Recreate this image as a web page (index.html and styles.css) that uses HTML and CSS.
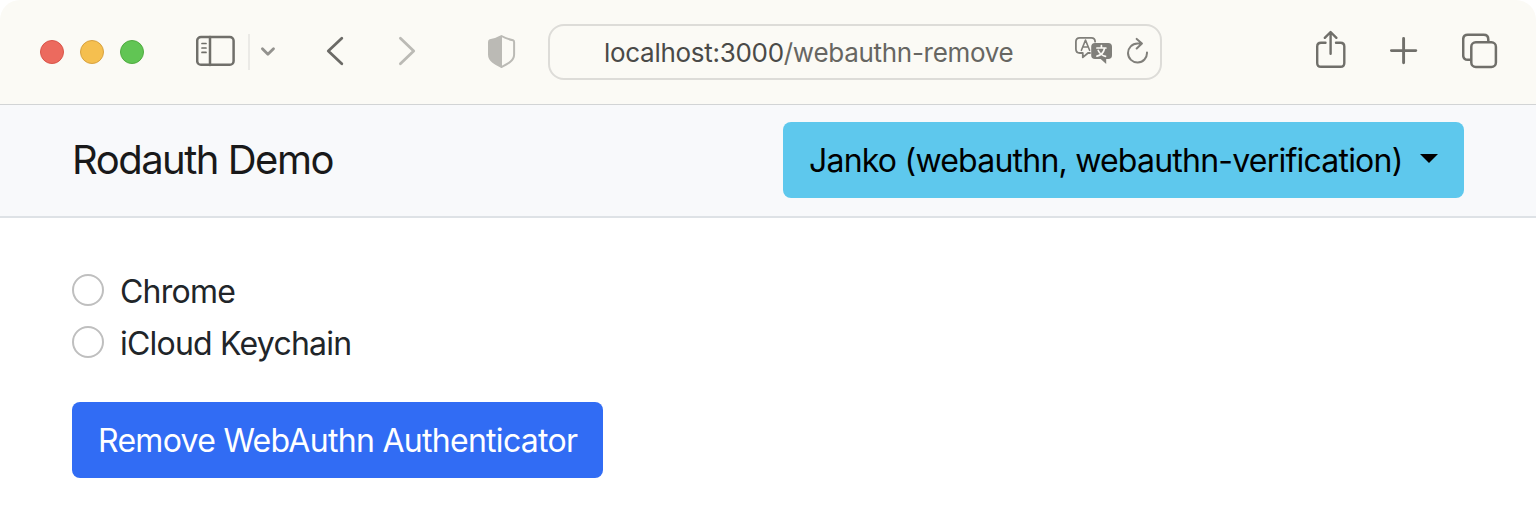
FILE: index.html
```html
<!DOCTYPE html>
<html lang="en">
<head>
<meta charset="utf-8">
<title>Rodauth Demo</title>
<link rel="stylesheet" href="styles.css">
</head>
<body>
<header class="toolbar">
  <div class="lights"><span class="light red"></span><span class="light yellow"></span><span class="light green"></span></div>
  <svg class="icon sidebar" width="40" height="52" viewBox="196 26 40 52" stroke="#706f6a" stroke-width="2.5"><rect x="197.2" y="37" width="36.4" height="27.8" rx="3.8"/><path d="M210 37v28"/><path d="M202 43.5h4M202 48h4M202 52.4h4" stroke-width="1.7"/></svg>
  <span class="divider"></span>
  <svg class="icon chevron" width="16" height="52" viewBox="260 26 16 52" stroke="#93928e" stroke-width="2.8"><path d="M262.4 48.7l5.5 5.5 5.6-5.5"/></svg>
  <svg class="icon back" width="20" height="52" viewBox="325 26 20 52" stroke="#6b6a66" stroke-width="2.8"><path d="M341.8 38.3L328.3 51l13.5 12.7"/></svg>
  <svg class="icon forward" width="20" height="52" viewBox="397 26 20 52" stroke="#bbbab5" stroke-width="2.8"><path d="M400.4 38.3L413.7 51l-13.3 12.7"/></svg>
  <svg class="icon shield" width="28" height="52" viewBox="488 26 28 52" stroke="#bbbab5" stroke-width="2"><path d="M501.5 36C505 38 509 39.3 513 40.3Q514.1 40.7 514.1 42V54.5C514.1 61 507.5 64 501.5 67C495.5 64 489 61 489 54.5V42Q489 40.7 490 40.3C494 39.3 498 38 501.5 36Z"/><path d="M502 36V67C495.5 64 489 61 489 54.5V42Q489 40.7 490 40.3C494 39.3 498 38 502 36Z" fill="#bbbab5" stroke="none"/></svg>
  <div class="address">
    <div class="url"><span class="host">localhost:3000</span>/webauthn-remove</div>
    <svg class="icon translate" width="38" height="52" viewBox="1075 26 38 52" stroke="#807f7a" stroke-width="1.8"><path d="M1090 53h-2l-5.2 4.4V53h-3q-3.9 0-3.9-4v-7.3q0-3.9 3.9-3.9h11.5q3.8 0 3.8 3.9"/><path d="M1081.4 50.3l4.1-10.2 4.1 10.2M1082.9 47h5.2" stroke-width="1.6"/><path d="M1095 43h13.2q3.8 0 3.8 3.8v8.4q0 3.8-3.8 3.8h-2v5l-5.5-5H1095q-3.8 0-3.8-3.8v-8.4q0-3.8 3.8-3.8z" fill="#807f7a" stroke="none"/><path d="M1101.4 45.5v2.2M1096.9 48h9M1098.2 50.5q2.3 4.7 7.3 5.8M1104.7 48q-1.6 6.8-7.7 8.2" stroke="#fbfaf5" stroke-width="1.7"/></svg>
    <svg class="icon reload" width="22" height="52" viewBox="1127 26 22 52" stroke="#807f7a" stroke-width="2"><path d="M1141.4 43.5H1137.5a9.5 9.5 0 1 0 9.5 9.1M1136.7 38.9l5.2 4.6-5.2 5"/></svg>
  </div>
  <svg class="icon share" width="32" height="52" viewBox="1315 26 32 52" stroke="#706f6a" stroke-width="2.4"><path d="M1325.5 42.7h-4.5q-3.8 0-3.8 3.8v16.5q0 3.8 3.8 3.8h19.5q3.8 0 3.8-3.8v-16.5q0-3.8-3.8-3.8h-4.5M1330.6 53.8V32.4M1324.8 37.8l5.8-5.8 5.8 5.8"/></svg>
  <svg class="icon plus" width="30" height="52" viewBox="1389 26 30 52" stroke="#706f6a" stroke-width="2.9"><path d="M1391.4 50.6h24.4M1403.6 38.4v24.4"/></svg>
  <svg class="icon tabs" width="36" height="52" viewBox="1462 26 36 52" stroke="#706f6a" stroke-width="2.5"><path d="M1470.5 59.8h-2.7q-4.6 0-4.6-4.6V39.4q0-4.6 4.6-4.6h15.9q4.6 0 4.6 4.6v2.1"/><rect x="1471.3" y="42.2" width="24.6" height="24.8" rx="4.5"/></svg>
</header>
<nav class="navbar">
  <a class="brand">Rodauth Demo</a>
  <button class="btn account"><span class="account-name">Janko (webauthn, webauthn-verification)</span><span class="caret"></span></button>
</nav>
<main class="content">
  <label class="option"><span class="radio"></span><span class="option-name">Chrome</span></label>
  <label class="option"><span class="radio"></span><span class="option-name">iCloud Keychain</span></label>
  <button class="btn remove">Remove WebAuthn Authenticator</button>
</main>
</body>
</html>
```
FILE: styles.css
```css
* { box-sizing: border-box; }
body { margin: 0; height: 518px; overflow: hidden; background: #fff; color: #212529; font: 440 32px/48px Inter, "Liberation Sans", sans-serif; letter-spacing: -0.78px; white-space: nowrap; }
.toolbar { display: flex; align-items: center; height: 105px; padding: 1px 38px 1px 40px; background: #fbfaf5; border-bottom: 1px solid #d2d4d5; border-radius: 20px 20px 0 0; }
.icon { display: block; flex: none; fill: none; stroke-linecap: round; stroke-linejoin: round; }
.lights { display: flex; gap: 16px; width: 104px; margin-right: 52px; }
.light { width: 24px; height: 24px; border-radius: 50%; border: 1px solid; }
.red { background: #ec6a5e; border-color: #d95549; }
.yellow { background: #f5bf4f; border-color: #d8a240; }
.green { background: #61c554; border-color: #50ac40; }
.divider { width: 2px; height: 36px; margin: 0 10px 0 12px; background: #ebeae6; }
.back { margin-left: 49px; }
.forward { margin-left: 52px; }
.shield { margin-left: 71px; }
.address { display: flex; align-items: center; width: 614px; height: 56px; margin-left: 32px; padding: 0 11px 0 54px; border: 2px solid #dddcd8; border-radius: 16px; }
.url { width: 471px; padding-top: 2px; font-size: 26px; line-height: 36px; color: #676662; letter-spacing: -0.29px; }
.host { color: #4a4a48; }
.reload { margin-left: 14px; }
.share { margin-left: 153px; }
.plus { margin-left: 42px; }
.tabs { margin-left: 43px; }
.navbar { display: flex; align-items: center; justify-content: space-between; height: 113px; padding: 0 72px 2px; background: #f8f9fb; border-bottom: 2px solid #dee2e6; }
.brand { padding-top: 1px; color: #19191a; font-size: 40px; line-height: 60px; letter-spacing: -1.5px; }
.btn { display: flex; align-items: center; height: 76px; padding: 2px 26px 0; border: 0; border-radius: 8px; font: inherit; letter-spacing: inherit; }
.account { width: 681px; justify-content: space-between; background: #5ec8ed; color: #000; }
.caret { width: 0; height: 0; margin-top: -4px; border: 9px solid transparent; border-top-color: #000; border-bottom: 0; }
.content { padding: 50px 72px; }
.option { display: flex; align-items: center; gap: 16px; height: 48px; margin-bottom: 4px; }
.option-name { padding-bottom: 1px; }
.radio { width: 32px; height: 32px; margin-top: -4px; border: 2px solid #bfbfbf; border-radius: 50%; }
.remove { width: 531px; margin-top: 34px; background: #316cf4; color: #fff; letter-spacing: -0.71px; }
```
